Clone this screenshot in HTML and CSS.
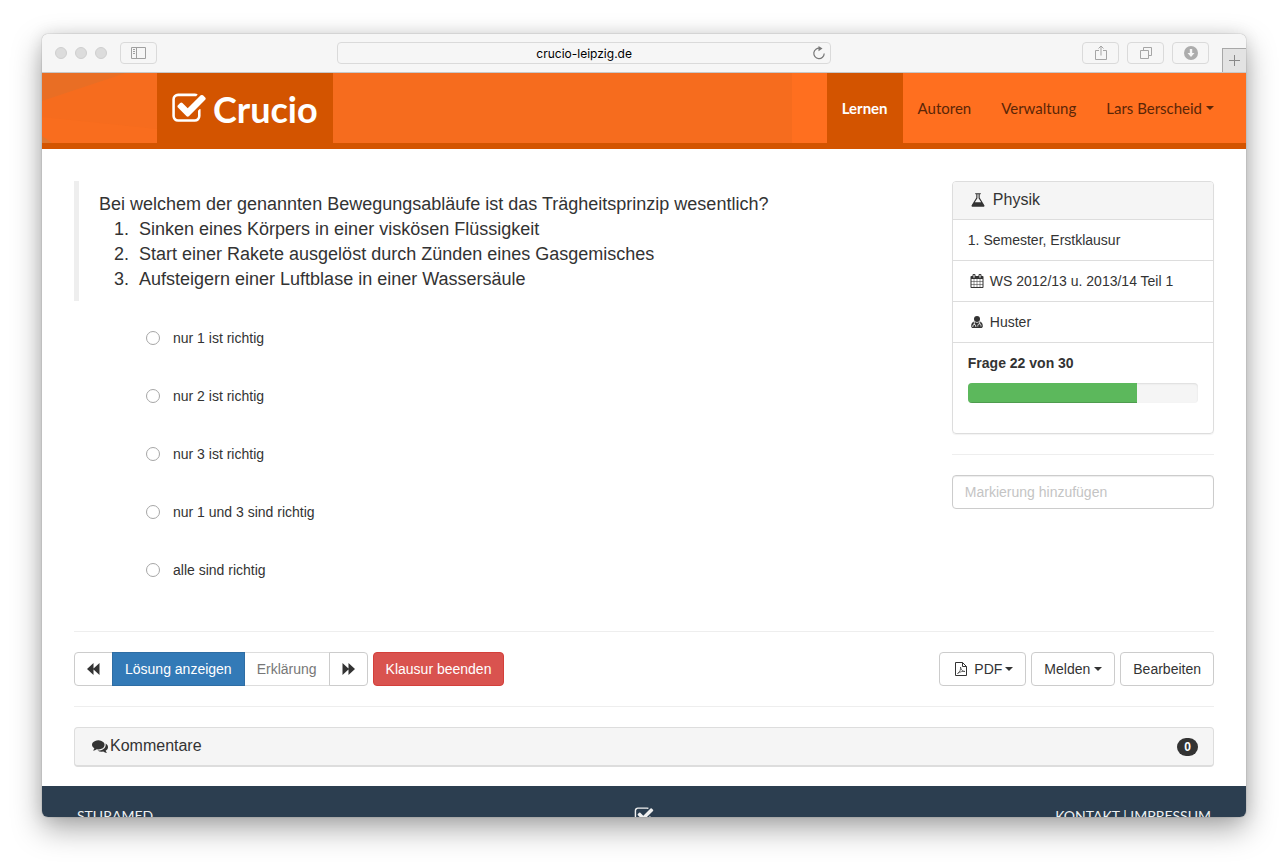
FILE: index.html
```html
<!DOCTYPE html>
<html lang="de">
<head>
<meta charset="utf-8">
<title>Crucio</title>
<link rel="stylesheet" href="styles.css">
</head>
<body>
<svg class="defs" aria-hidden="true">
  <symbol id="check" viewBox="0 0 1792 1792"><path d="M1472 930v318q0 119-84.500 203.500t-203.500 84.500h-832q-119 0-203.500-84.500t-84.500-203.500v-832q0-119 84.500-203.500t203.500-84.500h832q63 0 117 25 15 7 18 23 3 17-9 29l-49 49q-10 10-23 10-3 0-9-2-23-6-45-6h-832q-66 0-113 47t-47 113v832q0 66 47 113t113 47h832q66 0 113-47t47-113v-254q0-13 9-22l64-64q10-10 23-10 6 0 12 3 20 8 20 29zm231-489l-814 814q-24 24-57 24t-57-24l-430-430q-24-24-24-57t24-57l110-110q24-24 57-24t57 24l263 263 647-647q24-24 57-24t57 24l110 110q24 24 24 57t-24 57z"/></symbol>
</svg>
<div class="window">
  <header class="toolbar">
    <div class="lights"><span class="light"></span><span class="light"></span><span class="light"></span></div>
    <button class="tool" type="button" aria-label="Seitenleiste">
      <svg width="15" height="12" viewBox="0 0 15 12" fill="none" stroke="#a0a0a0"><path d="M.5.5h14v11H.5zM5.500.5v11M2 2.500h2M2 4.500h2M2 6.500h2"/></svg>
    </button>
    <div class="address">
      <input class="address-input" type="text" value="crucio-leipzig.de" aria-label="Adresse">
      <button class="reload" type="button" aria-label="Neu laden">
        <svg width="14" height="14" viewBox="0 0 14 14"><path d="M8 2.300A5.200 5.200 0 1 0 12.200 7.500" fill="none" stroke="#777" stroke-width="1.200"/><path d="M6.500 0l4 2.600-4 2.600z" fill="#777"/></svg>
      </button>
    </div>
    <div class="tools">
      <button class="tool" type="button" aria-label="Teilen">
        <svg width="12" height="16" viewBox="0 0 12 16" fill="none" stroke="#a5a5a5"><path d="M4 5.500H.5v9h11v-9H8M6 10.500V1M3.500 3.500L6 1l2.500 2.500"/></svg>
      </button>
      <button class="tool" type="button" aria-label="Tabs">
        <svg width="12" height="12" viewBox="0 0 12 12" fill="none" stroke="#a5a5a5"><path d="M.5 3.500h8v8h-8zM3.500 3V.5h8v8H9"/></svg>
      </button>
      <button class="tool" type="button" aria-label="Downloads">
        <svg width="14" height="14" viewBox="0 0 14 14"><circle cx="7" cy="7" r="7" fill="#acacac"/><path d="M5.800 3h2.400v4h2.300L7 11 3.500 7h2.300z" fill="#f6f6f6"/></svg>
      </button>
    </div>
    <button class="newtab" type="button" aria-label="Neuer Tab">
      <svg width="11" height="11" viewBox="0 0 11 11" stroke="#888"><path d="M5.500 0v11M0 5.500h11"/></svg>
    </button>
  </header>

  <nav class="nav">
    <svg class="nav-art" width="750" height="70" viewBox="0 0 750 70" aria-hidden="true">
      <path d="M0 0h750v70H0z" fill="#f66c1e"/>
      <path d="M0 44l115 12v14H0z" fill="#f96d1e"/>
      <path d="M0 0h84L0 28z" fill="#e96e24"/>
      <path d="M0 63l10 7H0z" fill="#df762e"/>
    </svg>
    <a class="brand" href="#"><svg width="36" height="36" fill="#fff" aria-hidden="true"><use href="#check"/></svg><span>Crucio</span></a>
    <div class="menu">
      <a class="menu-item menu-item-active" href="#">Lernen</a>
      <a class="menu-item" href="#">Autoren</a>
      <a class="menu-item" href="#">Verwaltung</a>
      <a class="menu-item" href="#">Lars Berscheid<span class="caret"></span></a>
    </div>
  </nav>

  <main class="content">
    <div class="columns">
      <section class="question">
        <blockquote class="quote">
          <p>Bei welchem der genannten Bewegungsabläufe ist das Trägheitsprinzip wesentlich?</p>
          <ol>
            <li>Sinken eines Körpers in einer viskösen Flüssigkeit</li>
            <li>Start einer Rakete ausgelöst durch Zünden eines Gasgemisches</li>
            <li>Aufsteigern einer Luftblase in einer Wassersäule</li>
          </ol>
        </blockquote>
        <div class="answers">
          <label class="answer"><input type="radio" name="answer">nur 1 ist richtig</label>
          <label class="answer"><input type="radio" name="answer">nur 2 ist richtig</label>
          <label class="answer"><input type="radio" name="answer">nur 3 ist richtig</label>
          <label class="answer"><input type="radio" name="answer">nur 1 und 3 sind richtig</label>
          <label class="answer"><input type="radio" name="answer">alle sind richtig</label>
        </div>
      </section>
      <aside class="side">
        <div class="panel">
          <h2 class="panel-head"><svg class="icon-lg" viewBox="0 0 1792 1792" aria-hidden="true"><path d="M1591 1448q56 89 21.500 152.500t-140.500 63.500h-1152q-106 0-140.500-63.500t21.500-152.500l503-793v-399h-64q-26 0-45-19t-19-45 19-45 45-19h512q26 0 45 19t19 45-19 45-45 19h-64v399zm-779-725l-272 429h712l-272-429-20-31v-436h-128v436z"/></svg>Physik</h2>
          <div class="row">1. Semester, Erstklausur</div>
          <div class="row"><svg class="icon" viewBox="0 0 1792 1792" aria-hidden="true"><path d="M192 1664h288v-288h-288v288zm352 0h320v-288h-320v288zm-352-352h288v-320h-288v320zm352 0h320v-320h-320v320zm-352-384h288v-288h-288v288zm736 736h320v-288h-320v288zm-384-736h320v-288h-320v288zm768 736h288v-288h-288v288zm-384-352h320v-320h-320v320zm-352-864v-288q0-13-9.500-22.500t-22.500-9.500h-64q-13 0-22.500 9.500t-9.500 22.500v288q0 13 9.500 22.500t22.500 9.500h64q13 0 22.500-9.500t9.500-22.500zm736 864h288v-320h-288v320zm-384-384h320v-288h-320v288zm384 0h288v-288h-288v288zm32-480v-288q0-13-9.500-22.500t-22.500-9.500h-64q-13 0-22.500 9.500t-9.500 22.500v288q0 13 9.500 22.500t22.500 9.500h64q13 0 22.500-9.500t9.500-22.500zm384-64v1280q0 52-38 90t-90 38h-1408q-52 0-90-38t-38-90v-1280q0-52 38-90t90-38h128v-96q0-66 47-113t113-47h64q66 0 113 47t47 113v96h384v-96q0-66 47-113t113-47h64q66 0 113 47t47 113v96h128q52 0 90 38t38 90z"/></svg>WS 2012/13 u. 2013/14 Teil 1</div>
          <div class="row"><svg class="icon" viewBox="0 0 14 14" aria-hidden="true"><circle cx="7" cy="4" r="3"/><path d="M4 6.500C2 7 1.200 9 1.200 11.200c0 1.200.8 1.800 1.800 1.800h8c1 0 1.800-.6 1.800-1.800C12.800 9 12 7 10 6.500 8.500 8 5.500 8 4 6.500z"/><path d="M4.300 7v3M2.800 12v-1a1.500 1.500 0 0 1 3 0v1M9.700 7v2M7.800 11.500V10.500a1.500 1.500 0 0 1 3.200 0v1" fill="none" stroke="#fff" stroke-width=".8"/></svg>Huster</div>
          <div class="row">
            <strong id="progress-label">Frage 22 von 30</strong>
            <div class="progress" role="progressbar" aria-labelledby="progress-label" aria-valuenow="22" aria-valuemin="0" aria-valuemax="30"><div class="progress-bar" style="width: 73.33%"></div></div>
          </div>
        </div>
        <hr class="rule">
        <input class="tag-input" type="text" placeholder="Markierung hinzufügen" aria-label="Markierung hinzufügen">
      </aside>
    </div>

    <hr class="rule">
    <div class="actions">
      <div class="group">
        <button class="btn" type="button" aria-label="Zurück"><svg width="13" height="12" viewBox="0 0 13 12" aria-hidden="true"><path d="M6.500 0v12L0 6zM12.500 0v12L6 6z"/></svg></button>
        <button class="btn btn-primary" type="button">Lösung anzeigen</button>
        <button class="btn btn-muted" type="button" disabled>Erklärung</button>
        <button class="btn" type="button" aria-label="Weiter"><svg width="13" height="12" viewBox="0 0 13 12" aria-hidden="true"><path d="M.5 0v12L7 6zM6.500 0v12L13 6z"/></svg></button>
      </div>
      <button class="btn btn-danger" type="button">Klausur beenden</button>
      <div class="actions-right">
        <button class="btn" type="button"><svg class="icon icon-pdf" viewBox="0 0 14 14" aria-hidden="true"><path d="M1.500.5h7l4 4v9h-11zM8.500.5v4h4" fill="none" stroke="#333"/><path d="M3.500 11.500C6 10 7 7 6.500 5c.5 3 2 4.500 4.500 4.500-2-.5-4.500 0-7.500 2" fill="none" stroke="#333" stroke-width=".7"/></svg>PDF<span class="caret caret-tight"></span></button>
        <button class="btn" type="button">Melden<span class="caret"></span></button>
        <button class="btn" type="button">Bearbeiten</button>
      </div>
    </div>
    <hr class="rule">
    <section class="comments">
      <h2 class="comments-title"><svg width="16" height="16" viewBox="0 0 1792 1792" aria-hidden="true"><path d="M1408 768q0 139-94 257t-256.500 186.500-353.500 68.500q-86 0-176-16-124 88-278 128-36 9-86 16h-3q-11 0-20.500-8t-11.500-21q-1-3-1-6.500t.5-6.500 2-6l2.500-5 3.500-5.500 4-5 4.500-5 4-4.500q5-6 23-25t26-29.500 22.500-29 25-38.500 20.500-44q-124-72-195-177t-71-224q0-139 94-257t256.500-186.500 353.500-68.500 353.500 68.500 256.500 186.500 94 257zm384 256q0 120-71 224.500t-195 176.500q10 24 20.500 44t25 38.500 22.500 29 26 29.500 23 25q1 1 4 4.500t4.500 5 4 5 3.500 5.500l2.500 5 2 6 .5 6.500-1 6.500q-3 14-13 22t-22 7q-50-7-86-16-154-40-278-128-90 16-176 16-271 0-472-132 58 4 88 4 161 0 309-45t264-129q125-92 192-212t67-254q0-77-23-152 129 71 204 178t75 230z"/></svg>Kommentare</h2>
      <span class="badge">0</span>
    </section>
  </main>

  <footer class="footer">
    <a href="#">STURAMED</a>
    <svg width="20" height="20" fill="#f0f0f0" aria-hidden="true"><use href="#check"/></svg>
    <div class="footer-links"><a href="#">KONTAKT</a> | <a href="#">IMPRESSUM</a></div>
  </footer>
</div>
</body>
</html>
```

FILE: styles.css
```css
* { box-sizing: border-box; }

body {
  margin: 0;
  height: 100vh;
  padding: 34px 42px 50px;
  background: #fff;
  color: #333;
  font: 14px/20px "Liberation Sans", Arial, sans-serif;
  overflow: hidden;
}

button, input { font: inherit; color: inherit; }
button { cursor: pointer; }
a { color: inherit; text-decoration: none; }
h2, p, ol, blockquote { margin: 0; font-weight: normal; }
svg { flex: none; }
.defs { position: absolute; width: 0; height: 0; }

.window {
  display: flex;
  flex-direction: column;
  height: 100%;
  overflow: hidden;
  background: #fff;
  border-radius: 6px;
  box-shadow: 0 0 1px rgba(0, 0, 0, .6), 0 0 16px rgba(0, 0, 0, .1), 0 12px 30px rgba(0, 0, 0, .34);
}
.window > * { flex: none; }

/* Browser toolbar */
.toolbar {
  display: flex;
  align-items: center;
  height: 39px;
  padding-left: 13px;
  background: #f6f6f6;
  border-bottom: 1px solid #c8c8c8;
}
.lights { display: flex; gap: 8px; margin-right: 13px; }
.light { width: 12px; height: 12px; border-radius: 50%; background: #dcdcdc; border: 1px solid #cfcfcf; }
.tool {
  display: flex;
  align-items: center;
  justify-content: center;
  width: 37px;
  height: 22px;
  padding: 0;
  background: #f6f6f6;
  border: 1px solid #dadada;
  border-radius: 4px;
}
.address { position: relative; width: 41.5%; margin-left: 180px; }
.address-input {
  display: block;
  width: 100%;
  height: 22px;
  padding: 0;
  background: #f6f6f6;
  border: 1px solid #dadada;
  border-radius: 4px;
  color: #000;
  font: 12px/20px Inter, sans-serif;
  text-align: center;
}
.reload { position: absolute; top: 4px; right: 5px; display: flex; padding: 0; background: none; border: 0; }
.tools { display: flex; gap: 8px; margin-left: auto; }
.newtab {
  display: flex;
  align-items: center;
  justify-content: center;
  align-self: flex-end;
  width: 24px;
  height: 24px;
  margin-left: 13px;
  padding: 0;
  background: #e3e3e3;
  border: solid #a8a8a8;
  border-width: 1px 0 0 1px;
}

/* Site navigation */
.nav {
  position: relative;
  display: flex;
  justify-content: space-between;
  height: 76px;
  padding: 0 17px 0 115px;
  background: #ff6f1f;
  border-bottom: 6px solid #d35400;
  font-family: Lato, sans-serif;
}
.nav-art { position: absolute; top: 0; left: 0; }
.brand {
  position: relative;
  display: flex;
  align-items: center;
  gap: 6px;
  padding: 2px 15px 0 14px;
  background: #d35400;
  color: #fff;
  font-size: 36px;
  line-height: 68px;
  font-weight: bold;
}
.menu { position: relative; display: flex; }
.menu-item {
  display: flex;
  align-items: center;
  padding: 0 15px;
  color: #5b2607;
  font-size: 15px;
}
.menu-item-active { background: #d35400; color: #fff; font-weight: bold; }
.caret {
  display: inline-block;
  margin-left: 4px;
  vertical-align: middle;
  border: solid transparent;
  border-width: 4px 4px 0;
  border-top-color: currentColor;
}
.caret-tight { margin-left: 3px; }

/* Question */
.content { padding: 32px 32px 19px; }
.columns { display: flex; gap: 30px; }
.question { flex: 1; }
.side { width: 23%; }
.quote {
  padding: 11px 20px 9px;
  border-left: 5px solid #eee;
  font-size: 18px;
  line-height: 25px;
}
.quote ol { padding-left: 35px; }
.quote li { padding-left: 5px; }
.answers { display: flex; flex-direction: column; gap: 38px; padding: 27px 0 51px 72px; }
.answer { display: flex; align-items: center; }
.answer input {
  appearance: none;
  width: 14px;
  height: 14px;
  margin: 0 13px 0 0;
  background: #fff;
  border: 1px solid #a6a6a6;
  border-radius: 50%;
}
.answer input:checked { border: 4px solid #337ab7; }

/* Exam details */
.panel { border: 1px solid #ddd; border-radius: 4px; box-shadow: 0 1px 1px rgba(0, 0, 0, .05); }
.panel-head {
  display: flex;
  align-items: center;
  height: 37px;
  padding: 0 15px 2px;
  background: #f5f5f5;
  border-radius: 3px 3px 0 0;
  font-size: 16px;
}
.icon-lg { width: 16px; height: 16px; margin: 0 7px 0 2px; fill: #333; }
.icon { width: 14px; height: 14px; margin: 0 6px 0 2px; fill: #333; vertical-align: -2px; }
.row { padding: 10px 15px; border-top: 1px solid #ddd; }
.progress {
  height: 20px;
  margin: 10px 0 20px;
  overflow: hidden;
  background: #f5f5f5;
  border-radius: 4px;
  box-shadow: inset 0 1px 2px rgba(0, 0, 0, .1);
}
.progress-bar { height: 100%; background: #5cb85c; box-shadow: inset 0 -1px 0 rgba(0, 0, 0, .15); }
.rule { height: 1px; margin: 20px 0; border: 0; background: #eee; }
.columns + .rule { margin-top: 0; }
.tag-input {
  display: block;
  width: 100%;
  height: 34px;
  padding: 6px 12px;
  border: 1px solid #ccc;
  border-radius: 4px;
  box-shadow: inset 0 1px 1px rgba(0, 0, 0, .075);
}
.tag-input::placeholder { color: #c4c4c4; opacity: 1; }

/* Buttons */
.actions { display: flex; gap: 5px; }
.actions-right { display: flex; gap: 5px; margin-left: auto; }
.group { display: flex; }
.btn {
  display: flex;
  align-items: center;
  height: 34px;
  padding: 0 12px;
  background: #fff;
  border: 1px solid #ccc;
  border-radius: 4px;
}
.btn svg { fill: #333; }
.group .btn { border-radius: 0; }
.group .btn + .btn { margin-left: -1px; }
.group .btn:first-child { border-radius: 4px 0 0 4px; }
.group .btn:last-child { border-radius: 0 4px 4px 0; }
.btn-primary { position: relative; background: #337ab7; border-color: #2e6da4; color: #fff; }
.btn-danger { background: #d9534f; border-color: #d43f3a; color: #fff; }
.btn-muted { border-color: #ddd; color: #777; }
.btn .icon-pdf { fill: none; }

/* Comments */
.comments {
  display: flex;
  align-items: center;
  justify-content: space-between;
  height: 40px;
  padding: 0 15px 0 17px;
  background: #f5f5f5;
  border: 1px solid #ddd;
  border-bottom-width: 2px;
  border-radius: 4px;
}
.comments-title { display: flex; align-items: center; gap: 2px; padding-bottom: 2px; font-size: 16px; }
.comments-title svg { fill: #333; }
.badge {
  padding: 0 7px;
  border-radius: 9px;
  background: #333;
  color: #fff;
  font-size: 12px;
  line-height: 18px;
  font-weight: bold;
}

.footer {
  display: grid;
  grid-template-columns: 1fr auto 1fr;
  align-items: center;
  padding: 20px 35px;
  background: #2c3e50;
  color: #ecf0f1;
  font: 14px/20px Lato, sans-serif;
}
.footer-links { text-align: right; }
```
